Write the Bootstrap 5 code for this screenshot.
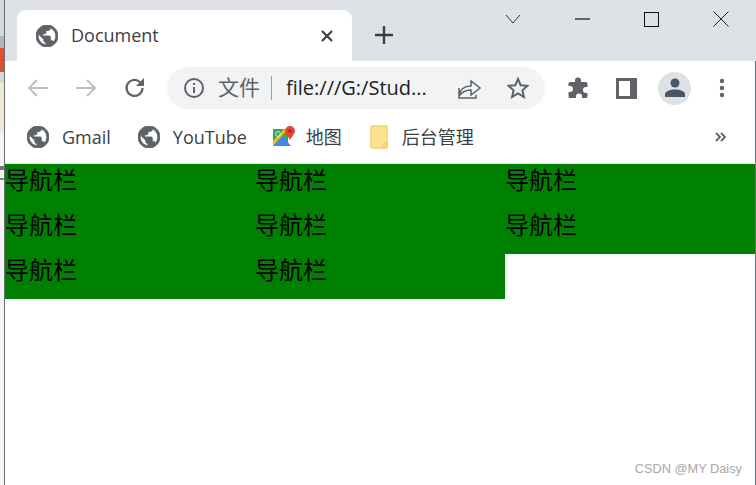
<!DOCTYPE html>
<html lang="zh">
<head>
  <meta charset="UTF-8" />
  <meta name="viewport" content="width=device-width, initial-scale=1.0" />
  <title>Document</title>
  <link href="https://cdn.jsdelivr.net/npm/bootstrap@5.3.0/dist/css/bootstrap.min.css" rel="stylesheet" />
  <style>
    html, body { height: 485px; overflow: hidden; }
    body { font-family: "Open Sans", "Noto Sans CJK SC", sans-serif; background: #fff; }
    svg { display: block; flex: none; }

    /* sliver of desktop behind the browser window */
    .desk-strip { width: 5px; flex: none; background: #f4f4f4; border-right: 1px solid #6b6e72; }
    .desk-a { height: 36px; background: #d5d9de; }
    .desk-b { height: 12px; background: #b4b4b4; }
    .desk-c { height: 24px; background: #e0532a; }
    .desk-d { height: 11px; background: #d9d9d9; }
    .desk-e { height: 50px; background: #f1e8d6; }
    .desk-f { height: 33px; background: #f4f4f4; }
    .desk-g { height: 4px; margin-bottom: 8px; background: #777; }
    .desk-h { height: 2px; margin-bottom: 10px; background: #888; }

    .browser { flex: 1 1 0; min-width: 0; }
    .tab-strip { height: 61px; background: #dee1e6; padding: 10px 0 0 12px; }
    .doc-tab { width: 335px; height: 51px; background: #fff; border-radius: 9px 9px 0 0; padding: 0 18px 0 19px; font-size: 18px; color: #3c4043; }
    .doc-tab span { margin-left: 13px; }
    .new-tab { margin: 15px 0 0 22px; }
    .win-btns { gap: 54px; padding: 1px 27px 0 0; }

    .globe-icon { stroke: #5f6368; stroke-width: .8; }
    .edge-line { border-right: 1px solid #6b6e72; }
    .tool-bar { height: 54px; }
    .url-box { width: 378px; height: 42px; margin-left: 21px; border-radius: 21px; background: #f1f3f4; padding: 0 16px 0 17px; font-size: 20px; }
    .url-label { color: #5f6368; margin-left: 14px; font-size: 21px; }
    .url-sep { width: 1px; height: 24px; background: #9aa0a6; margin: 0 14px 0 11px; }
    .url-text { color: #202124; white-space: nowrap; }
    .avatar { width: 33px; height: 33px; border-radius: 50%; background: #dee1e6; }

    .bookmark-bar { height: 49px; padding: 0 29px 4px 22px; border-bottom: 1px solid #e4e6e8; font-size: 18px; color: #3c4043; }
    .mark-item { gap: 13px; }
    .mark-map { gap: 11px; margin-left: 26px; }
    .mark-folder { gap: 12px; margin-left: 28px; }

    .nav-cell { width: 250px; height: 45px; background: #008000; color: #000; font-size: 24px; line-height: 30px; font-family: "Noto Sans CJK SC", sans-serif; }
    .page-area { position: relative; height: 321px; }
    .watermark { position: absolute; right: 13px; bottom: 7px; font-size: 12.8px; color: #a8a8a8; font-family: "Liberation Sans", sans-serif; }
  </style>
</head>
<body class="d-flex">
  <div class="desk-strip d-flex flex-column overflow-hidden">
    <div class="desk-a"></div>
    <div class="desk-b"></div>
    <div class="desk-c"></div>
    <div class="desk-d"></div>
    <div class="desk-e"></div>
    <div class="desk-f"></div>
    <div class="desk-g"></div>
    <div class="desk-h"></div>
  </div>

  <div class="browser d-flex flex-column">
    <!-- Tabs -->
    <div class="tab-strip d-flex align-items-start">
      <div class="doc-tab d-flex align-items-center">
        <svg class="globe-icon" width="22" height="22" viewBox="2 2 20 20"><path fill="#5f6368" d="M12 2C6.48 2 2 6.48 2 12s4.48 10 10 10 10-4.48 10-10S17.52 2 12 2zm-1 17.93c-3.95-.49-7-3.85-7-7.93 0-.62.08-1.21.21-1.79L9 15v1c0 1.100.9 2 2 2v1.930zm6.900-2.540c-.26-.81-1-1.390-1.900-1.390h-1v-3c0-.55-.45-1-1-1H8v-2h2c.55 0 1-.45 1-1V7h2c1.100 0 2-.9 2-2v-.41c2.930 1.190 5 4.060 5 7.410 0 2.080-.8 3.970-2.100 5.390z"/></svg>
        <span>Document</span>
        <svg class="ms-auto" width="14" height="14" viewBox="0 0 14 14"><path d="M2 2l10 10M12 2L2 12" stroke="#3c4043" stroke-width="2.2"/></svg>
      </div>
      <svg class="new-tab" width="20" height="20" viewBox="0 0 20 20"><path d="M10 1v18M1 10h18" stroke="#3c4043" stroke-width="2.4"/></svg>
      <div class="win-btns d-flex align-items-center ms-auto">
        <svg width="16" height="12" viewBox="0 0 16 12"><path d="M1 2l7 8 7-8" fill="none" stroke="#333" stroke-width="1"/></svg>
        <svg width="15" height="16" viewBox="0 0 15 16"><path d="M0 8h15" stroke="#111" stroke-width="1.2"/></svg>
        <svg width="15" height="15" viewBox="0 0 15 15"><rect x=".5" y=".5" width="14" height="14" fill="none" stroke="#111"/></svg>
        <svg width="16" height="16" viewBox="0 0 16 16"><path d="M.5.5l15 15M15.500.5l-15 15" stroke="#222" stroke-width="1"/></svg>
      </div>
    </div>

    <!-- Address bar -->
    <div class="tool-bar edge-line d-flex align-items-center">
      <svg width="22" height="20" viewBox="0 0 22 20" style="margin-left:22px"><path d="M21 10H2M10 2l-8 8 8 8" fill="none" stroke="#bdc1c6" stroke-width="2"/></svg>
      <svg width="22" height="20" viewBox="0 0 22 20" style="margin-left:26px"><path d="M1 10h19M12 2l8 8-8 8" fill="none" stroke="#bdc1c6" stroke-width="2"/></svg>
      <svg width="22" height="22" viewBox="0 0 22 22" style="margin-left:27px"><path d="M18.500 11a8 8 0 1 1-2.300-5.700" fill="none" stroke="#5f6368" stroke-width="2.200"/><path d="M20 1v8h-8z" fill="#5f6368"/></svg>
      <div class="url-box d-flex align-items-center">
        <svg width="20" height="20" viewBox="0 0 20 20"><circle cx="10" cy="10" r="9" fill="none" stroke="#5f6368" stroke-width="2"/><path d="M10 9v6M10 5v2" stroke="#5f6368" stroke-width="2"/></svg>
        <span class="url-label">文件</span>
        <span class="url-sep"></span>
        <span class="url-text">file:///G:/Stud...</span>
        <svg class="ms-auto" width="24" height="22" viewBox="0 0 24 22" style="margin-right:25px"><path d="M1 11v10h17v-3M1 19c1-7 6-10 12-10V4l9 7-9 7v-5c-5 0-9 2-12 6z" fill="none" stroke="#5f6368" stroke-width="1.500"/></svg>
        <svg width="22" height="22" viewBox="0 0 22 22"><path d="M11 2l2.700 6.200 6.800.6-5.100 4.500 1.500 6.700L11 16.500 5.100 20l1.500-6.700L1.500 8.800l6.800-.6z" fill="none" stroke="#5f6368" stroke-width="2"/></svg>
      </div>
      <svg width="22" height="22" viewBox="0 0 22 22" style="margin-left:22px"><path d="M8 3.500a3 3 0 0 1 6 0V5h5a1.500 1.500 0 0 1 1.500 1.500V10h-1.500a3 3 0 0 0 0 6h1.500v3.500A1.500 1.500 0 0 1 19 21h-4v-1.500a3 3 0 0 0-6 0V21H3a1.500 1.500 0 0 1-1.500-1.500V15H3a3 3 0 0 0 0-6H1.500V6.500A1.500 1.500 0 0 1 3 5h5z" fill="#5f6368"/></svg>
      <svg width="21" height="21" viewBox="0 0 21 21" style="margin-left:27px"><rect width="21" height="21" fill="#5f6368"/><rect x="3" y="3" width="11" height="15" fill="#fff"/></svg>
      <div class="avatar d-flex align-items-center justify-content-center" style="margin-left:21px">
        <svg width="20" height="20" viewBox="0 0 20 20"><circle cx="10" cy="5" r="4.500" fill="#4a5568"/><path d="M0 19v-2.500C0 13 5 11.500 10 11.500s10 1.500 10 5V19z" fill="#4a5568"/></svg>
      </div>
      <svg width="6" height="20" viewBox="0 0 6 20" style="margin-left:28px"><circle cx="3" cy="3" r="2.200" fill="#5f6368"/><circle cx="3" cy="10" r="2.200" fill="#5f6368"/><circle cx="3" cy="17" r="2.200" fill="#5f6368"/></svg>
    </div>

    <!-- Bookmarks -->
    <div class="bookmark-bar edge-line d-flex align-items-center">
      <div class="mark-item d-flex align-items-center">
        <svg class="globe-icon" width="22" height="22" viewBox="2 2 20 20"><path fill="#5f6368" d="M12 2C6.48 2 2 6.48 2 12s4.48 10 10 10 10-4.48 10-10S17.52 2 12 2zm-1 17.93c-3.95-.49-7-3.85-7-7.93 0-.62.08-1.21.21-1.79L9 15v1c0 1.100.9 2 2 2v1.930zm6.900-2.540c-.26-.81-1-1.390-1.900-1.390h-1v-3c0-.55-.45-1-1-1H8v-2h2c.55 0 1-.45 1-1V7h2c1.100 0 2-.9 2-2v-.41c2.930 1.190 5 4.060 5 7.410 0 2.080-.8 3.970-2.100 5.390z"/></svg>
        <span>Gmail</span>
      </div>
      <div class="mark-item d-flex align-items-center" style="margin-left:27px">
        <svg class="globe-icon" width="22" height="22" viewBox="2 2 20 20"><path fill="#5f6368" d="M12 2C6.48 2 2 6.48 2 12s4.48 10 10 10 10-4.48 10-10S17.52 2 12 2zm-1 17.93c-3.95-.49-7-3.85-7-7.93 0-.62.08-1.21.21-1.79L9 15v1c0 1.100.9 2 2 2v1.930zm6.900-2.540c-.26-.81-1-1.390-1.900-1.390h-1v-3c0-.55-.45-1-1-1H8v-2h2c.55 0 1-.45 1-1V7h2c1.100 0 2-.9 2-2v-.41c2.930 1.190 5 4.060 5 7.410 0 2.080-.8 3.970-2.100 5.390z"/></svg>
        <span>YouTube</span>
      </div>
      <div class="mark-map d-flex align-items-center">
        <svg width="22" height="22" viewBox="0 0 22 22"><path d="M0 3h15v17H0z" fill="#34a853"/><path d="M0 20L10 10l8 10z" fill="#4285f4"/><path d="M0 20L15 3h-4L0 15z" fill="#fbbc04"/><circle cx="5" cy="8" r="2.500" fill="none" stroke="#c8e6c9" stroke-width="1"/><path d="M17 0a5 5 0 0 1 5 5c0 3-3 5-5 9-2-4-5-6-5-9a5 5 0 0 1 5-5z" fill="#ea4335"/><circle cx="17" cy="5" r="1.800" fill="#a52714"/></svg>
        <span>地图</span>
      </div>
      <div class="mark-folder d-flex align-items-center">
        <svg width="20" height="24" viewBox="0 0 20 24"><path d="M1 2a1 1 0 0 1 1-1h14a1 1 0 0 1 1 1v20a1 1 0 0 1-1 1H2a1 1 0 0 1-1-1z" fill="#fde293" stroke="#fad165" stroke-width="1.500"/><path d="M14 23v-4a1.500 1.500 0 0 1 3 0v4" fill="none" stroke="#f5c842" stroke-width="1.200"/></svg>
        <span>后台管理</span>
      </div>
      <svg class="ms-auto" width="11" height="10" viewBox="0 0 11 10"><path d="M1 1l4 4-4 4M6 1l4 4-4 4" fill="none" stroke="#5f6368" stroke-width="1.800"/></svg>
    </div>

    <!-- Page -->
    <div class="page-area edge-line">
      <div class="d-flex flex-wrap">
        <div class="nav-cell">导航栏</div>
        <div class="nav-cell">导航栏</div>
        <div class="nav-cell">导航栏</div>
        <div class="nav-cell">导航栏</div>
        <div class="nav-cell">导航栏</div>
        <div class="nav-cell">导航栏</div>
        <div class="nav-cell">导航栏</div>
        <div class="nav-cell">导航栏</div>
      </div>
      <div class="watermark">CSDN @MY Daisy</div>
    </div>
  </div>

  <script src="https://cdn.jsdelivr.net/npm/bootstrap@5.3.0/dist/js/bootstrap.bundle.min.js"></script>
</body>
</html>
